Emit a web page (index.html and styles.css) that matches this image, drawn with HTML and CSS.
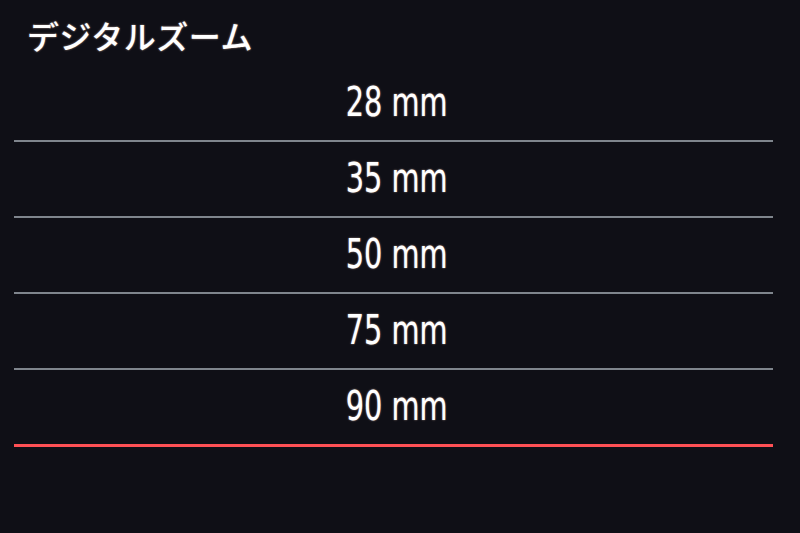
FILE: index.html
```html
<!DOCTYPE html>
<html lang="ja">
<head>
<meta charset="utf-8">
<link rel="stylesheet" href="styles.css">
</head>
<body>
<div class="screen">
  <div class="title">デジタルズーム</div>
  <ul class="list">
    <li class="row"><span class="value">28 mm</span></li>
    <li class="row"><span class="value">35 mm</span></li>
    <li class="row"><span class="value">50 mm</span></li>
    <li class="row"><span class="value">75 mm</span></li>
    <li class="row selected"><span class="value">90 mm</span></li>
  </ul>
</div>
</body>
</html>
```
FILE: styles.css
```css
html, body {
  margin: 0;
  padding: 0;
  background: #0f0f16;
}
.screen {
  width: 800px;
  height: 533px;
  background: #0f0f16;
  color: #ffffff;
  overflow: hidden;
}
.title {
  height: 66px;
  box-sizing: border-box;
  padding: 14px 0 0 27px;
  font-family: "Noto Sans CJK JP", sans-serif;
  font-weight: 500;
  font-size: 32px;
  letter-spacing: 0.5px;
  line-height: 42px;
  text-shadow: 0 0 2px rgba(255, 220, 200, 0.7);
}
.list {
  list-style: none;
  margin: 0 27px 0 14px;
  padding: 0;
}
.row {
  height: 76px;
  box-sizing: border-box;
  border-bottom: 2px solid #7f858d;
  display: flex;
  align-items: center;
  justify-content: center;
  padding: 0 0 2px 7px;
  font-family: "DejaVu Sans Condensed", "DejaVu Sans", sans-serif;
  font-size: 40px;
  text-shadow: 0 0 2px rgba(255, 220, 200, 0.7);
}
.value {
  display: inline-block;
  transform: scaleX(0.8);
  white-space: pre;
}
.row.selected {
  border-bottom: 3px solid #ff5055;
  height: 77px;
}
```
